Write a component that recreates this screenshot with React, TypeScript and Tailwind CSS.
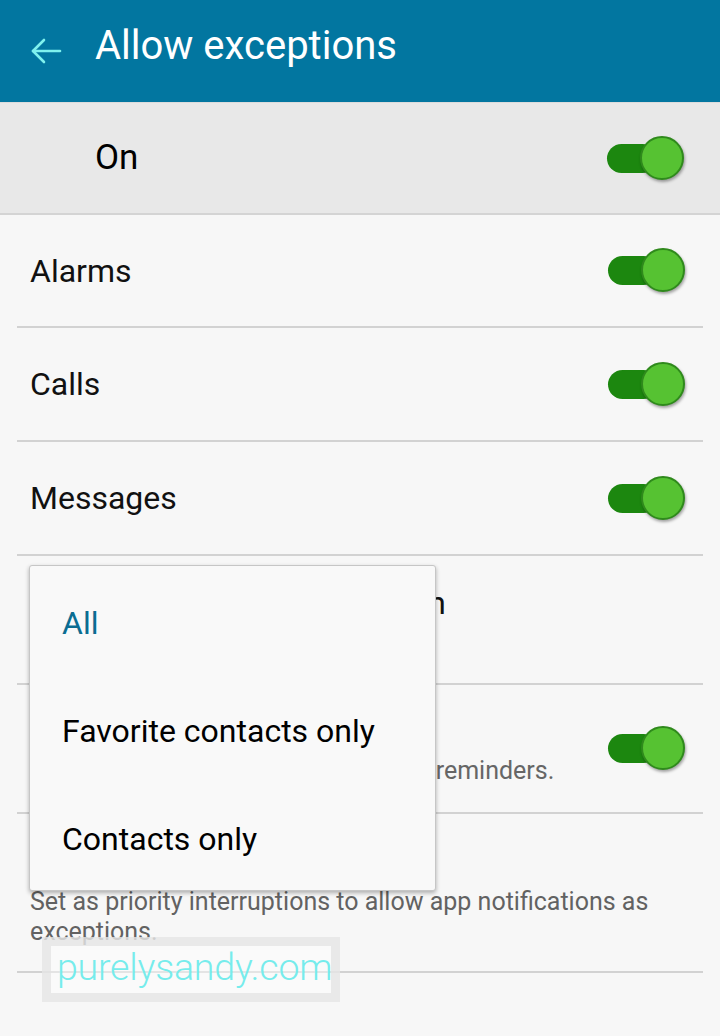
import { ReactNode } from "react";

function Toggle() {
  return (
    <div className="relative w-[77px] h-[45px] shrink-0">
      <div className="absolute left-0 top-[8px] w-[50px] h-[29px] rounded-full bg-[#1c870f]" />
      <div className="absolute right-0 top-0 w-[44px] h-[44px] rounded-full bg-[#56c232] border-2 border-[#2f8a1c] shadow-[1px_2px_3px_rgba(0,0,0,0.35)]" />
    </div>
  );
}

function Row({
  title,
  sub,
  toggle,
  className,
  titleClass = "",
}: {
  title: string;
  sub?: ReactNode;
  toggle?: boolean;
  className: string;
  titleClass?: string;
}) {
  return (
    <div className={`flex items-center justify-between pl-[13px] pr-[18px] border-b-2 border-[#d2d2d2] ${className}`}>
      <div className="flex flex-col">
        <div className={`text-[32px] leading-[38px] text-[#111] whitespace-nowrap ${titleClass}`}>{title}</div>
        {sub}
      </div>
      {toggle && <Toggle />}
    </div>
  );
}

export default function App() {
  return (
    <div
      className="relative w-[720px] h-[1036px] bg-[#f7f7f7] overflow-hidden"
      style={{ fontFamily: "Roboto, 'Liberation Sans', sans-serif" }}
    >
      {/* action bar */}
      <div className="h-[102px] bg-[#0276a0] flex items-center pl-[30px] gap-[33px]">
        <svg width="32" height="28" viewBox="0 0 32 28" fill="none" stroke="#7ff1ee" strokeWidth="2.6" strokeLinecap="round" strokeLinejoin="round">
          <path d="M3 14 H30" />
          <path d="M14 3 L3 14 L14 25" />
        </svg>
        <span className="text-[40px] text-white leading-none pb-[10px]">Allow exceptions</span>
      </div>

      {/* master switch */}
      <div className="h-[113px] bg-[#e8e8e8] border-t border-[#dcdcdc] border-b-2 border-b-[#d4d4d4] flex items-center justify-between pl-[95px] pr-[36px]">
        <span className="text-[35px] text-black">On</span>
        <Toggle />
      </div>

      <div className="mx-[17px]">
        <Row title="Alarms" toggle className="h-[113px]" />
        <Row title="Calls" toggle className="h-[114px]" />
        <Row title="Messages" toggle className="h-[114px]" />
        <Row
          title="Calls and text messages from"
          titleClass="tracking-[-0.3px]"
          className="h-[129px]"
          sub={<div className="text-[24px] leading-[30px] text-[#0b6d92] mt-[4px]">All</div>}
        />
        <Row
          title="Events and reminders"
          toggle
          className="h-[129px]"
          sub={
            <div className="text-[25px] leading-[30px] text-[#666] mt-[6px] whitespace-nowrap">
              <span className="tracking-[0.8px]">Allow notifications for events and </span>
              reminders.
            </div>
          }
        />
        <div className="h-[159px] pl-[13px] pr-[16px] pt-[18px] border-b-2 border-[#d2d2d2]">
          <div className="text-[32px] leading-[38px] text-[#111]">App notifications</div>
          <div className="text-[25px] leading-[30px] text-[#626262] mt-[17px]">
            Set as priority interruptions to allow app notifications as exceptions.
          </div>
        </div>
      </div>

      {/* popup list */}
      <div className="absolute left-[29px] top-[565px] w-[407px] h-[326px] bg-[#f9f9f9] border border-[#c6c6c6] rounded-[3px] shadow-[0_2px_4px_rgba(0,0,0,0.3)] pt-[3px]">
        <div className="h-[108px] flex items-center pl-[32px] text-[32px] text-[#0b6d92]">All</div>
        <div className="h-[108px] flex items-center pl-[32px] text-[32px] text-black">Favorite contacts only</div>
        <div className="h-[108px] flex items-center pl-[32px] text-[32px] text-black">Contacts only</div>
      </div>

      {/* watermark */}
      <div className="absolute left-[42px] top-[937px] w-[298px] h-[65px] border-[9px] border-[rgba(225,225,225,0.7)] bg-[rgba(255,255,255,0.4)] flex items-center pl-[6px]">
        <span className="text-[37.5px] leading-none text-[#76ecec] font-light tracking-[-0.2px] pb-[4px]">purelysandy.com</span>
      </div>
    </div>
  );
}
